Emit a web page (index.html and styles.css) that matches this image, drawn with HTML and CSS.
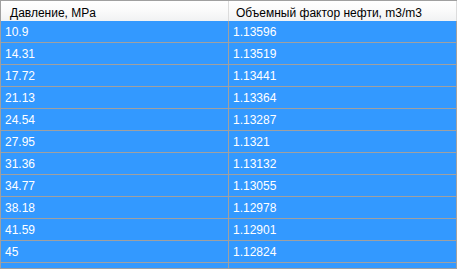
FILE: index.html
```html
<!DOCTYPE html>
<html>
<head>
<meta charset="utf-8">
<link rel="stylesheet" href="styles.css">
</head>
<body>
<div class="grid">
  <div class="row head">
    <div class="hcell c1">Давление, MPa</div>
    <div class="hcell c2">Объемный фактор нефти, m3/m3</div>
  </div>
  <div class="row"><div class="cell">10.9</div><div class="cell">1.13596</div></div>
  <div class="row"><div class="cell">14.31</div><div class="cell">1.13519</div></div>
  <div class="row"><div class="cell">17.72</div><div class="cell">1.13441</div></div>
  <div class="row"><div class="cell">21.13</div><div class="cell">1.13364</div></div>
  <div class="row"><div class="cell">24.54</div><div class="cell">1.13287</div></div>
  <div class="row"><div class="cell">27.95</div><div class="cell">1.1321</div></div>
  <div class="row"><div class="cell">31.36</div><div class="cell">1.13132</div></div>
  <div class="row"><div class="cell">34.77</div><div class="cell">1.13055</div></div>
  <div class="row"><div class="cell">38.18</div><div class="cell">1.12978</div></div>
  <div class="row"><div class="cell">41.59</div><div class="cell">1.12901</div></div>
  <div class="row"><div class="cell">45</div><div class="cell">1.12824</div></div>
  <div class="row"><div class="cell"></div><div class="cell"></div></div>
</div>
</body>
</html>
```
FILE: styles.css
```css
html, body {
  margin: 0;
  padding: 0;
  background: #ffffff;
}
body {
  font-family: "Liberation Sans", Arial, sans-serif;
  font-size: 12px;
}
.grid {
  width: 456px;
  height: 267px;
  border: 1px solid #a0a0a0;
  border-right: none;
  overflow: hidden;
  display: flex;
  flex-direction: column;
}
.row {
  display: flex;
  flex: none;
}
.head {
  height: 20px;
  background: linear-gradient(#ffffff 0%, #fbfbfb 45%, #f1f2f3 100%);
}
.hcell {
  box-sizing: border-box;
  width: 228px;
  height: 20px;
  line-height: 20px;
  padding-top: 2px;
  border-right: 1px solid #dcdcdc;
  color: #000;
  white-space: nowrap;
}
.hcell.c1 { padding-left: 9px; }
.hcell.c2 { padding-left: 7px; }
.cell {
  box-sizing: border-box;
  width: 228px;
  height: 22px;
  line-height: 22px;
  padding-left: 4px;
  background: #3399ff;
  color: #ffffff;
  border-right: 1px solid #a0a0a0;
  border-bottom: 1px solid #a0a0a0;
  white-space: nowrap;
}
```
